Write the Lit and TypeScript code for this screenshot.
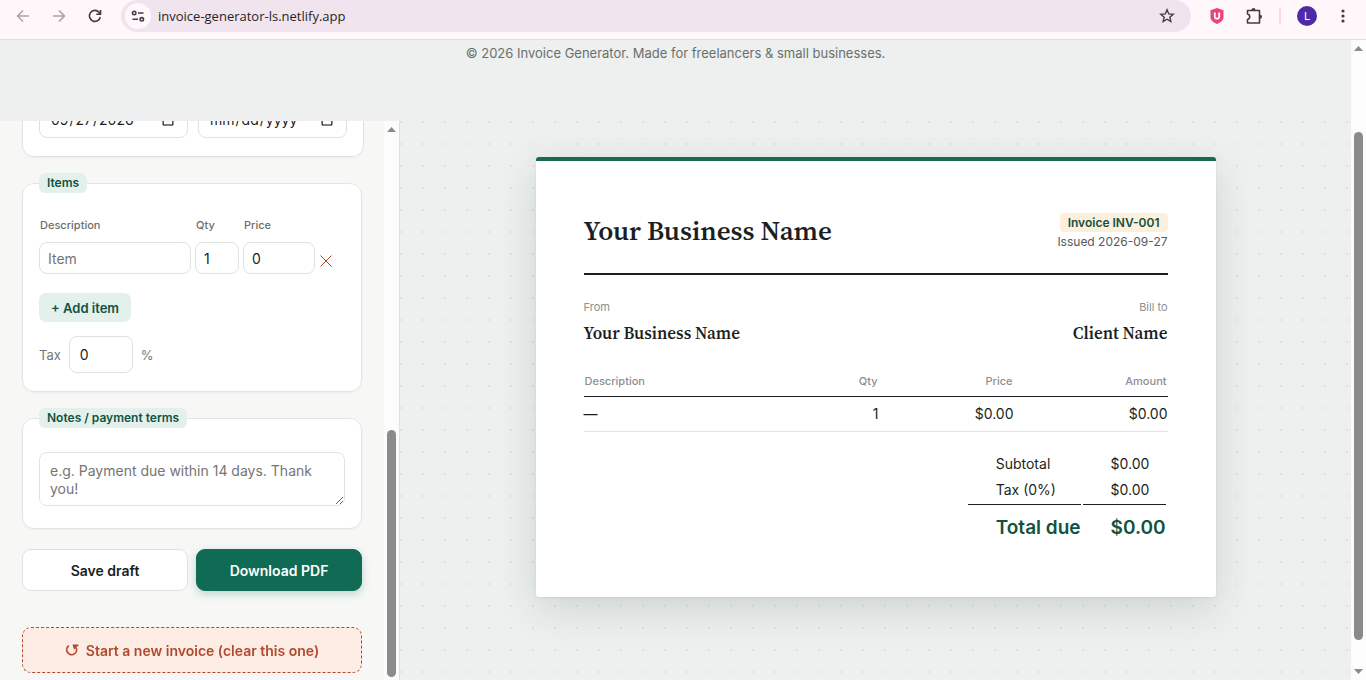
import { LitElement, html, css } from "lit";
import { customElement, property } from "lit/decorators.js";

@customElement("scroll-rail")
export class ScrollRail extends LitElement {
  @property({ type: Number }) before = 0;
  @property({ type: Number }) thumb = 1;
  @property({ type: Number }) after = 0;
  @property({ type: Boolean }) down = false;

  static styles = css`
    :host {
      display: flex;
      flex-direction: column;
      align-items: center;
      flex: 0 0 15px;
      box-sizing: border-box;
      background: #fcfcfc;
    }
    .arrow {
      flex: none;
      width: 9px;
      height: 17px;
      fill: #8b8b8b;
    }
    .space {
      flex-basis: 0;
    }
    .thumb {
      flex-basis: 0;
      width: 9px;
      border-radius: 5px;
      background: #8b8b8b;
    }
  `;

  render() {
    return html`
      <svg class="arrow" viewBox="0 0 9 17"><path d="M0 11 4.500 6 9 11z" /></svg>
      <div class="space" style="flex-grow:${this.before}"></div>
      <div class="thumb" style="flex-grow:${this.thumb}"></div>
      <div class="space" style="flex-grow:${this.after}"></div>
      ${this.down
        ? html`<svg class="arrow" viewBox="0 0 9 17"><path d="M0 6 4.500 11 9 6z" /></svg>`
        : ""}
    `;
  }
}

@customElement("browser-bar")
export class BrowserBar extends LitElement {
  static styles = css`
    :host {
      display: flex;
      align-items: center;
      box-sizing: border-box;
      height: 40px;
      padding: 0 13px 7px 12px;
      border-bottom: 1px solid #e3dce0;
      background: #fff7fa;
      font-family: "Open Sans", "Noto Sans", sans-serif;
    }
    button {
      display: flex;
      align-items: center;
      justify-content: center;
      flex: none;
      padding: 0;
      border: 0;
      background: none;
    }
    svg {
      display: block;
      fill: none;
      stroke: #443c43;
      stroke-width: 1.6;
    }
    .nav {
      width: 22px;
      height: 22px;
      margin-right: 14px;
    }
    .reload {
      margin-right: 15px;
    }
    .dim svg {
      stroke: #aca4a9;
    }
    .address {
      display: flex;
      align-items: center;
      flex: 1;
      height: 32px;
      padding: 0 14px 0 4px;
      border-radius: 16px;
      background: #f0e5ee;
    }
    .site {
      width: 26px;
      height: 26px;
      margin-right: 7px;
      border-radius: 50%;
      background: #fff7fa;
    }
    input {
      flex: 1;
      min-width: 0;
      padding: 0;
      border: 0;
      outline: 0;
      background: none;
      color: #2a2329;
      font: 13px/20px "Open Sans", "Noto Sans", sans-serif;
    }
    .tool {
      width: 20px;
      height: 24px;
    }
    .tools {
      display: flex;
      align-items: center;
      padding-left: 16px;
    }
    .puzzle {
      margin-left: 17px;
    }
    .divider {
      width: 2px;
      height: 16px;
      margin: 0 16px 0 15px;
      background: #ffd8e6;
    }
    .avatar {
      width: 20px;
      height: 20px;
      border-radius: 50%;
      background: #4d2ba8;
      color: #fff;
      font: 11px/20px Inter, sans-serif;
    }
    .more {
      margin-left: 16px;
    }
    .solid {
      fill: #443c43;
      stroke: none;
    }
  `;

  render() {
    return html`
      <button class="nav dim" aria-label="Back">
        <svg width="16" height="16" viewBox="0 0 16 16"><path d="M14 8H3M8 2.500 2.500 8 8 13.500" /></svg>
      </button>
      <button class="nav dim" aria-label="Forward">
        <svg width="16" height="16" viewBox="0 0 16 16"><path d="M2 8h11M8 2.500 13.500 8 8 13.500" /></svg>
      </button>
      <button class="nav reload" aria-label="Reload">
        <svg width="16" height="16" viewBox="0 0 16 16">
          <path d="M13.300 9A5.500 5.500 0 1 1 12 4.200L13.500 6M13.500 2v4.200H9.300" />
        </svg>
      </button>
      <div class="address">
        <button class="site" aria-label="Site information">
          <svg width="14" height="14" viewBox="0 0 14 14">
            <circle cx="3.200" cy="4" r="1.700" /><path d="M7 4h5.500M1.500 10.300H7" /><circle cx="10.800" cy="10.300" r="1.700" />
          </svg>
        </button>
        <input aria-label="Address" type="text" value="invoice-generator-ls.netlify.app" />
        <button class="tool" aria-label="Bookmark">
          <svg width="16" height="16" viewBox="0 0 16 16">
            <path stroke-width="1.400" d="m8 1.800 1.750 4.100 4.450.4-3.380 2.930 1.020 4.350L8 11.270l-3.840 2.310 1.020-4.350L1.800 6.300l4.450-.4z" />
          </svg>
        </button>
      </div>
      <div class="tools">
        <button class="tool" aria-label="Shield extension">
          <svg width="16" height="18" viewBox="0 0 16 18">
            <path fill="#e8447c" stroke="none" d="M8 1 14.500 3.200v7c0 3.300-3.500 5.400-6.500 6.800-3-1.400-6.500-3.500-6.500-6.800v-7z" />
            <path stroke="#fff" stroke-width="1.800" d="M5.800 5.500v4a2.200 2.200 0 0 0 4.400 0v-4" />
          </svg>
        </button>
        <button class="tool puzzle" aria-label="Extensions">
          <svg width="18" height="18" viewBox="0 0 18 18">
            <path stroke-linejoin="round" d="M2.500 3.500H14.500V16H2.500V12.500c3-.6 3-4.900 0-5.500z" />
            <path class="solid" d="M6.500 3a2 2 0 0 1 4 0zM15 7.700a2 2 0 0 1 0 4z" />
          </svg>
        </button>
        <span class="divider"></span>
        <button class="avatar" aria-label="Profile">L</button>
        <button class="tool more" aria-label="Menu">
          <svg width="4" height="14" viewBox="0 0 4 14">
            <g class="solid"><circle cx="2" cy="2" r="1.600" /><circle cx="2" cy="7" r="1.600" /><circle cx="2" cy="12" r="1.600" /></g>
          </svg>
        </button>
      </div>
    `;
  }
}

@customElement("invoice-form")
export class InvoiceForm extends LitElement {
  static styles = css`
    :host {
      display: flex;
      flex: 0 0 399px;
      min-height: 0;
      overflow: hidden;
      border-right: 1px solid #dde1df;
      background: #f7f8f6;
      color: #1b1f23;
      font: 14px/20px Inter, sans-serif;
    }
    * {
      box-sizing: border-box;
    }
    .form {
      display: flex;
      flex-direction: column;
      justify-content: flex-end;
      flex: 1;
      min-width: 0;
      padding: 0 22px 7px;
    }
    fieldset {
      flex: none;
      min-width: 0;
      margin: 0 0 16px;
      padding: 24px 16px 18px;
      border: 1px solid #e1e4e2;
      border-radius: 12px;
      background: #fff;
      box-shadow: 0 1px 2px rgba(20, 40, 30, 0.05);
    }
    .dates {
      display: flex;
      gap: 10px;
      width: 342px;
    }
    legend {
      padding: 0 8px;
      border-radius: 6px;
      background: #e3f0eb;
      color: #12523f;
      font-size: 12px;
      font-weight: 600;
      line-height: 20px;
    }
    input,
    textarea {
      min-width: 0;
      margin: 0;
      border: 1px solid #dfe2e0;
      border-radius: 8px;
      outline: 0;
      background: #fff;
      color: #1b1f23;
      font: 14px/18px Inter, sans-serif;
    }
    ::placeholder {
      color: #757575;
    }
    .date {
      width: 149px;
      height: 37px;
      padding: 0 10px;
    }
    .items {
      display: grid;
      grid-template-columns: 152px 44px 72px 24px;
      column-gap: 4px;
      row-gap: 9px;
      align-items: center;
    }
    .items label {
      padding-left: 1px;
      color: #6a6f6c;
      font-size: 11px;
      font-weight: 500;
      line-height: 16px;
    }
    .items input {
      width: 100%;
      height: 32px;
      padding: 0 8px;
    }
    button {
      font-family: inherit;
    }
    .remove {
      padding: 5px 0 0 1px;
      border: 0;
      background: none;
      text-align: left;
    }
    .remove svg {
      display: block;
      fill: none;
      stroke: #b04a2e;
    }
    .add {
      display: block;
      height: 29px;
      margin: 19px 0 14px;
      padding: 0 12px;
      border: 0;
      border-radius: 7px;
      background: #e3f0eb;
      color: #12523f;
      font-size: 13px;
      font-weight: 600;
    }
    .tax {
      display: flex;
      align-items: center;
      gap: 8px;
      color: #73787a;
      font-size: 13px;
    }
    .tax input {
      width: 64px;
      height: 37px;
      padding: 0 10px;
    }
    .notes {
      padding-bottom: 22px;
      margin-bottom: 20px;
    }
    textarea {
      display: block;
      width: 100%;
      height: 54px;
      padding: 9px 10px;
    }
    .actions {
      display: flex;
      gap: 8px;
      margin-bottom: 36px;
    }
    .actions button {
      flex: 1;
      height: 42px;
      border: 1px solid #dfe2e0;
      border-radius: 9px;
      background: #fff;
      color: #1b1f23;
      font-size: 14px;
      font-weight: 600;
    }
    .actions .primary {
      border-color: #0f6b54;
      background: #0f6b54;
      color: #fff;
      box-shadow: 0 3px 8px rgba(15, 107, 84, 0.25);
    }
    .clear {
      display: flex;
      align-items: center;
      justify-content: center;
      gap: 7px;
      flex: none;
      height: 46px;
      border: 1px dashed #b04a2e;
      border-radius: 9px;
      background: #fdece4;
      color: #b04a2e;
      font-size: 14px;
      font-weight: 600;
    }
    .clear svg {
      fill: none;
      stroke: currentColor;
      stroke-width: 1.7;
    }
    .clear .tip {
      fill: currentColor;
      stroke: none;
    }
  `;

  render() {
    return html`
      <form class="form" @submit=${(e: Event) => e.preventDefault()}>
        <fieldset class="dates">
          <input class="date" type="date" aria-label="Issue date" value="2026-09-27" />
          <input class="date" type="date" aria-label="Due date" />
        </fieldset>

        <fieldset>
          <legend>Items</legend>
          <div class="items">
            <label for="desc">Description</label>
            <label for="qty">Qty</label>
            <label for="price">Price</label>
            <span></span>
            <input id="desc" type="text" placeholder="Item" />
            <input id="qty" type="text" inputmode="numeric" value="1" />
            <input id="price" type="text" inputmode="decimal" value="0" />
            <button class="remove" type="button" aria-label="Remove item">
              <svg width="12" height="12" viewBox="0 0 12 12"><path d="M.5.5l11 11M11.500.5l-11 11" /></svg>
            </button>
          </div>
          <button class="add" type="button">+ Add item</button>
          <div class="tax">
            <label for="tax">Tax</label>
            <input id="tax" type="text" inputmode="decimal" value="0" />
            <span>%</span>
          </div>
        </fieldset>

        <fieldset class="notes">
          <legend>Notes / payment terms</legend>
          <textarea
            aria-label="Notes"
            placeholder="e.g. Payment due within 14 days. Thank you!"
          ></textarea>
        </fieldset>

        <div class="actions">
          <button type="button">Save draft</button>
          <button class="primary" type="submit">Download PDF</button>
        </div>
        <button class="clear" type="button">
          <svg width="14" height="14" viewBox="0 0 14 14">
            <path d="M3.800 2.800A4.900 4.900 0 1 0 10.800 4.200" />
            <path class="tip" d="M7.500 1.600H13.400V3.200L11.600 3.400 9 6.800z" />
          </svg>
          Start a new invoice (clear this one)
        </button>
      </form>
      <scroll-rail .before=${292} .thumb=${247} .after=${3}></scroll-rail>
    `;
  }
}

@customElement("invoice-paper")
export class InvoicePaper extends LitElement {
  static styles = css`
    :host {
      display: block;
      box-sizing: border-box;
      width: 100%;
      max-width: 680px;
      padding: 48px 48px 52px;
      border-top: 4px solid #176b55;
      border-radius: 3px;
      background: #fff;
      box-shadow: 0 12px 40px rgba(20, 40, 30, 0.14), 0 1px 3px rgba(20, 40, 30, 0.08);
      color: #1b1f23;
      font: 14px/20px Inter, sans-serif;
    }
    .serif {
      margin: 0;
      font-family: "Source Serif 4", "Source Serif Pro", "Liberation Serif", serif;
      font-weight: 600;
    }
    header {
      display: flex;
      justify-content: space-between;
      align-items: center;
      padding-bottom: 21px;
      border-bottom: 2px solid #1b1f23;
    }
    h1 {
      font-size: 27px;
      line-height: 36px;
    }
    .meta {
      display: flex;
      flex-direction: column;
      align-items: flex-end;
      padding-top: 4px;
      color: #55595c;
      font-size: 12px;
    }
    .number {
      padding: 0 8px;
      border-radius: 4px;
      background: #fcefdc;
      color: #12523f;
      font-weight: 600;
      line-height: 19px;
    }
    .parties {
      display: flex;
      justify-content: space-between;
      padding: 23px 0 28px;
    }
    .to {
      text-align: right;
    }
    .caption {
      margin: 0 0 6px;
      color: #8b8f92;
      font-size: 11px;
      line-height: 18px;
    }
    h2 {
      font-size: 17px;
      line-height: 22px;
    }
    .lines {
      width: 100%;
      margin-bottom: 18px;
      border-collapse: collapse;
      table-layout: fixed;
    }
    .lines th {
      padding: 0 1px 6px;
      border-bottom: 1px solid #1b1f23;
      color: #8b8f92;
      font-size: 11px;
      font-weight: 500;
      line-height: 18px;
      text-align: right;
    }
    .lines td {
      padding: 7px 0;
      border-bottom: 1px solid #e0e3e1;
      text-align: right;
    }
    .lines .first {
      text-align: left;
    }
    .qty {
      width: 96px;
    }
    .price {
      width: 135px;
    }
    .amount {
      width: 154px;
    }
    .sums {
      margin-left: auto;
      border-spacing: 2px;
    }
    .sums th,
    .sums td {
      padding: 2px 0 2px 28px;
      font-weight: 400;
      text-align: left;
    }
    .sums .due th,
    .sums .due td {
      padding-top: 10px;
      border-top: 1px solid #1b1f23;
      color: #12523f;
      font-size: 19px;
      font-weight: 600;
      line-height: 26px;
    }
  `;

  render() {
    return html`
      <header>
        <h1 class="serif">Your Business Name</h1>
        <div class="meta">
          <span class="number">Invoice INV-001</span>
          <span>Issued 2026-09-27</span>
        </div>
      </header>
      <section class="parties">
        <div>
          <p class="caption">From</p>
          <h2 class="serif">Your Business Name</h2>
        </div>
        <div class="to">
          <p class="caption">Bill to</p>
          <h2 class="serif">Client Name</h2>
        </div>
      </section>
      <table class="lines">
        <colgroup>
          <col /><col class="qty" /><col class="price" /><col class="amount" />
        </colgroup>
        <thead>
          <tr><th class="first">Description</th><th>Qty</th><th>Price</th><th>Amount</th></tr>
        </thead>
        <tbody>
          <tr><td class="first">—</td><td>1</td><td>$0.00</td><td>$0.00</td></tr>
        </tbody>
      </table>
      <table class="sums">
        <tbody>
          <tr><th>Subtotal</th><td>$0.00</td></tr>
          <tr><th>Tax (0%)</th><td>$0.00</td></tr>
          <tr class="due"><th>Total due</th><td>$0.00</td></tr>
        </tbody>
      </table>
    `;
  }
}

@customElement("app-root")
export class AppRoot extends LitElement {
  static styles = css`
    :host {
      display: flex;
      flex-direction: column;
      height: 100vh;
      overflow: hidden;
      background: #edf0ef;
      font-family: Inter, sans-serif;
    }
    browser-bar {
      flex: none;
    }
    .window {
      display: flex;
      flex: 1;
      min-height: 0;
    }
    .page {
      display: flex;
      flex-direction: column;
      flex: 1;
      min-width: 0;
    }
    footer {
      flex: none;
      padding: 3px 0 58px;
      color: #6a6f6c;
      font-size: 13px;
      line-height: 20px;
      text-align: center;
    }
    .workspace {
      display: flex;
      flex: 1;
      min-height: 0;
    }
    .preview {
      display: flex;
      justify-content: center;
      align-items: flex-start;
      flex: 1;
      min-width: 0;
      padding: 36px 24px;
      background: radial-gradient(circle at 1px 1px, #dfe3e1 1px, transparent 1px) 0 0 / 22px 22px;
    }
  `;

  render() {
    return html`
      <browser-bar></browser-bar>
      <div class="window">
        <div class="page">
          <footer>© 2026 Invoice Generator. Made for freelancers &amp; small businesses.</footer>
          <main class="workspace">
            <invoice-form></invoice-form>
            <section class="preview"><invoice-paper></invoice-paper></section>
          </main>
        </div>
        <scroll-rail .before=${75} .thumb=${508} .after=${23} .down=${true}></scroll-rail>
      </div>
    `;
  }
}
